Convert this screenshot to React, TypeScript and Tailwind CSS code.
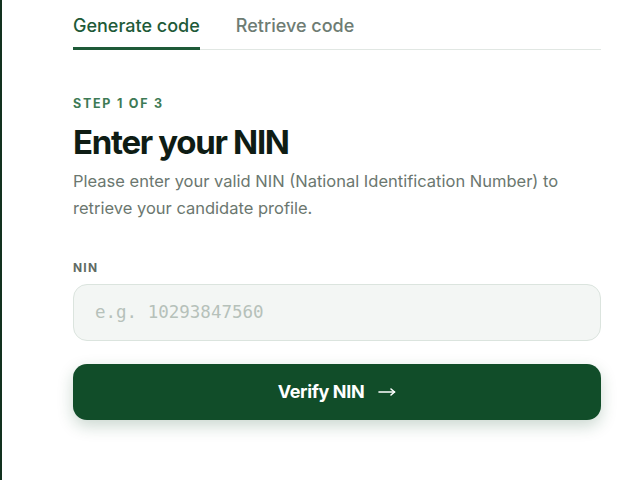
import React from 'react';

const App = () => {
  const tabs = ['Generate code', 'Retrieve code'];
  const active = 0;

  return (
    <div className="flex min-h-[480px] w-full bg-white font-['Inter',sans-serif]">
      <div className="w-[2px] shrink-0 bg-[#12311f]"></div>
      <div className="ml-[71px] w-[528px]">
        <div className="flex gap-9 border-b border-[#e1e7e3]">
          {tabs.map((tab, index) => (
            <button
              key={index}
              className={
                index === active
                  ? 'relative -mb-px border-b-[3px] border-[#1e5a38] pt-[12px] pb-[8px] text-[18px] font-medium text-[#1e5a38]'
                  : 'relative -mb-px pt-[12px] pb-[11px] text-[18px] font-medium text-[#6e7c73]'
              }
            >
              {tab}
            </button>
          ))}
        </div>

        <div className="pt-[45px]">
          <p className="text-[12.5px] font-bold tracking-[0.14em] text-[#3d7a55]">STEP 1 OF 3</p>
          <h1 className="mt-[8px] text-[33px] font-bold leading-[40px] tracking-[-0.04em] text-[#0e1c14]">
            Enter your NIN
          </h1>
          <p className="mt-[6px] text-[16.5px] leading-[27px] tracking-normal text-[#6b776f]">
            Please enter your valid NIN (National Identification Number) to retrieve your candidate profile.
          </p>

          <label className="mt-[37px] block text-[12px] font-bold tracking-[0.1em] text-[#5f6b64]">NIN</label>
          <input
            type="text"
            placeholder="e.g. 10293847560"
            className="mt-[7px] h-[57px] w-full rounded-[14px] border border-[#dbe4de] bg-[#f3f6f4] px-[21px] font-['DejaVu_Sans_Mono',monospace] text-[17.5px] text-[#0e1c14] placeholder:text-[#b6c1ba] outline-none"
          />

          <button className="mt-[23px] flex h-[56px] w-full items-center justify-center gap-[14px] rounded-[14px] bg-[#114d29] text-[18px] font-bold tracking-[-0.02em] text-white shadow-[0_6px_16px_rgba(17,77,41,0.22)]">
            <span>Verify NIN</span>
            {/* long thin arrow */}
            <svg width="18" height="10" viewBox="0 0 18 10" fill="none" stroke="currentColor" strokeWidth="1.6" strokeLinecap="round" strokeLinejoin="round">
              <path d="M1 5h15.5" />
              <path d="M13 2l3.5 3-3.5 3" />
            </svg>
          </button>
        </div>
      </div>
    </div>
  );
};

export default App;
